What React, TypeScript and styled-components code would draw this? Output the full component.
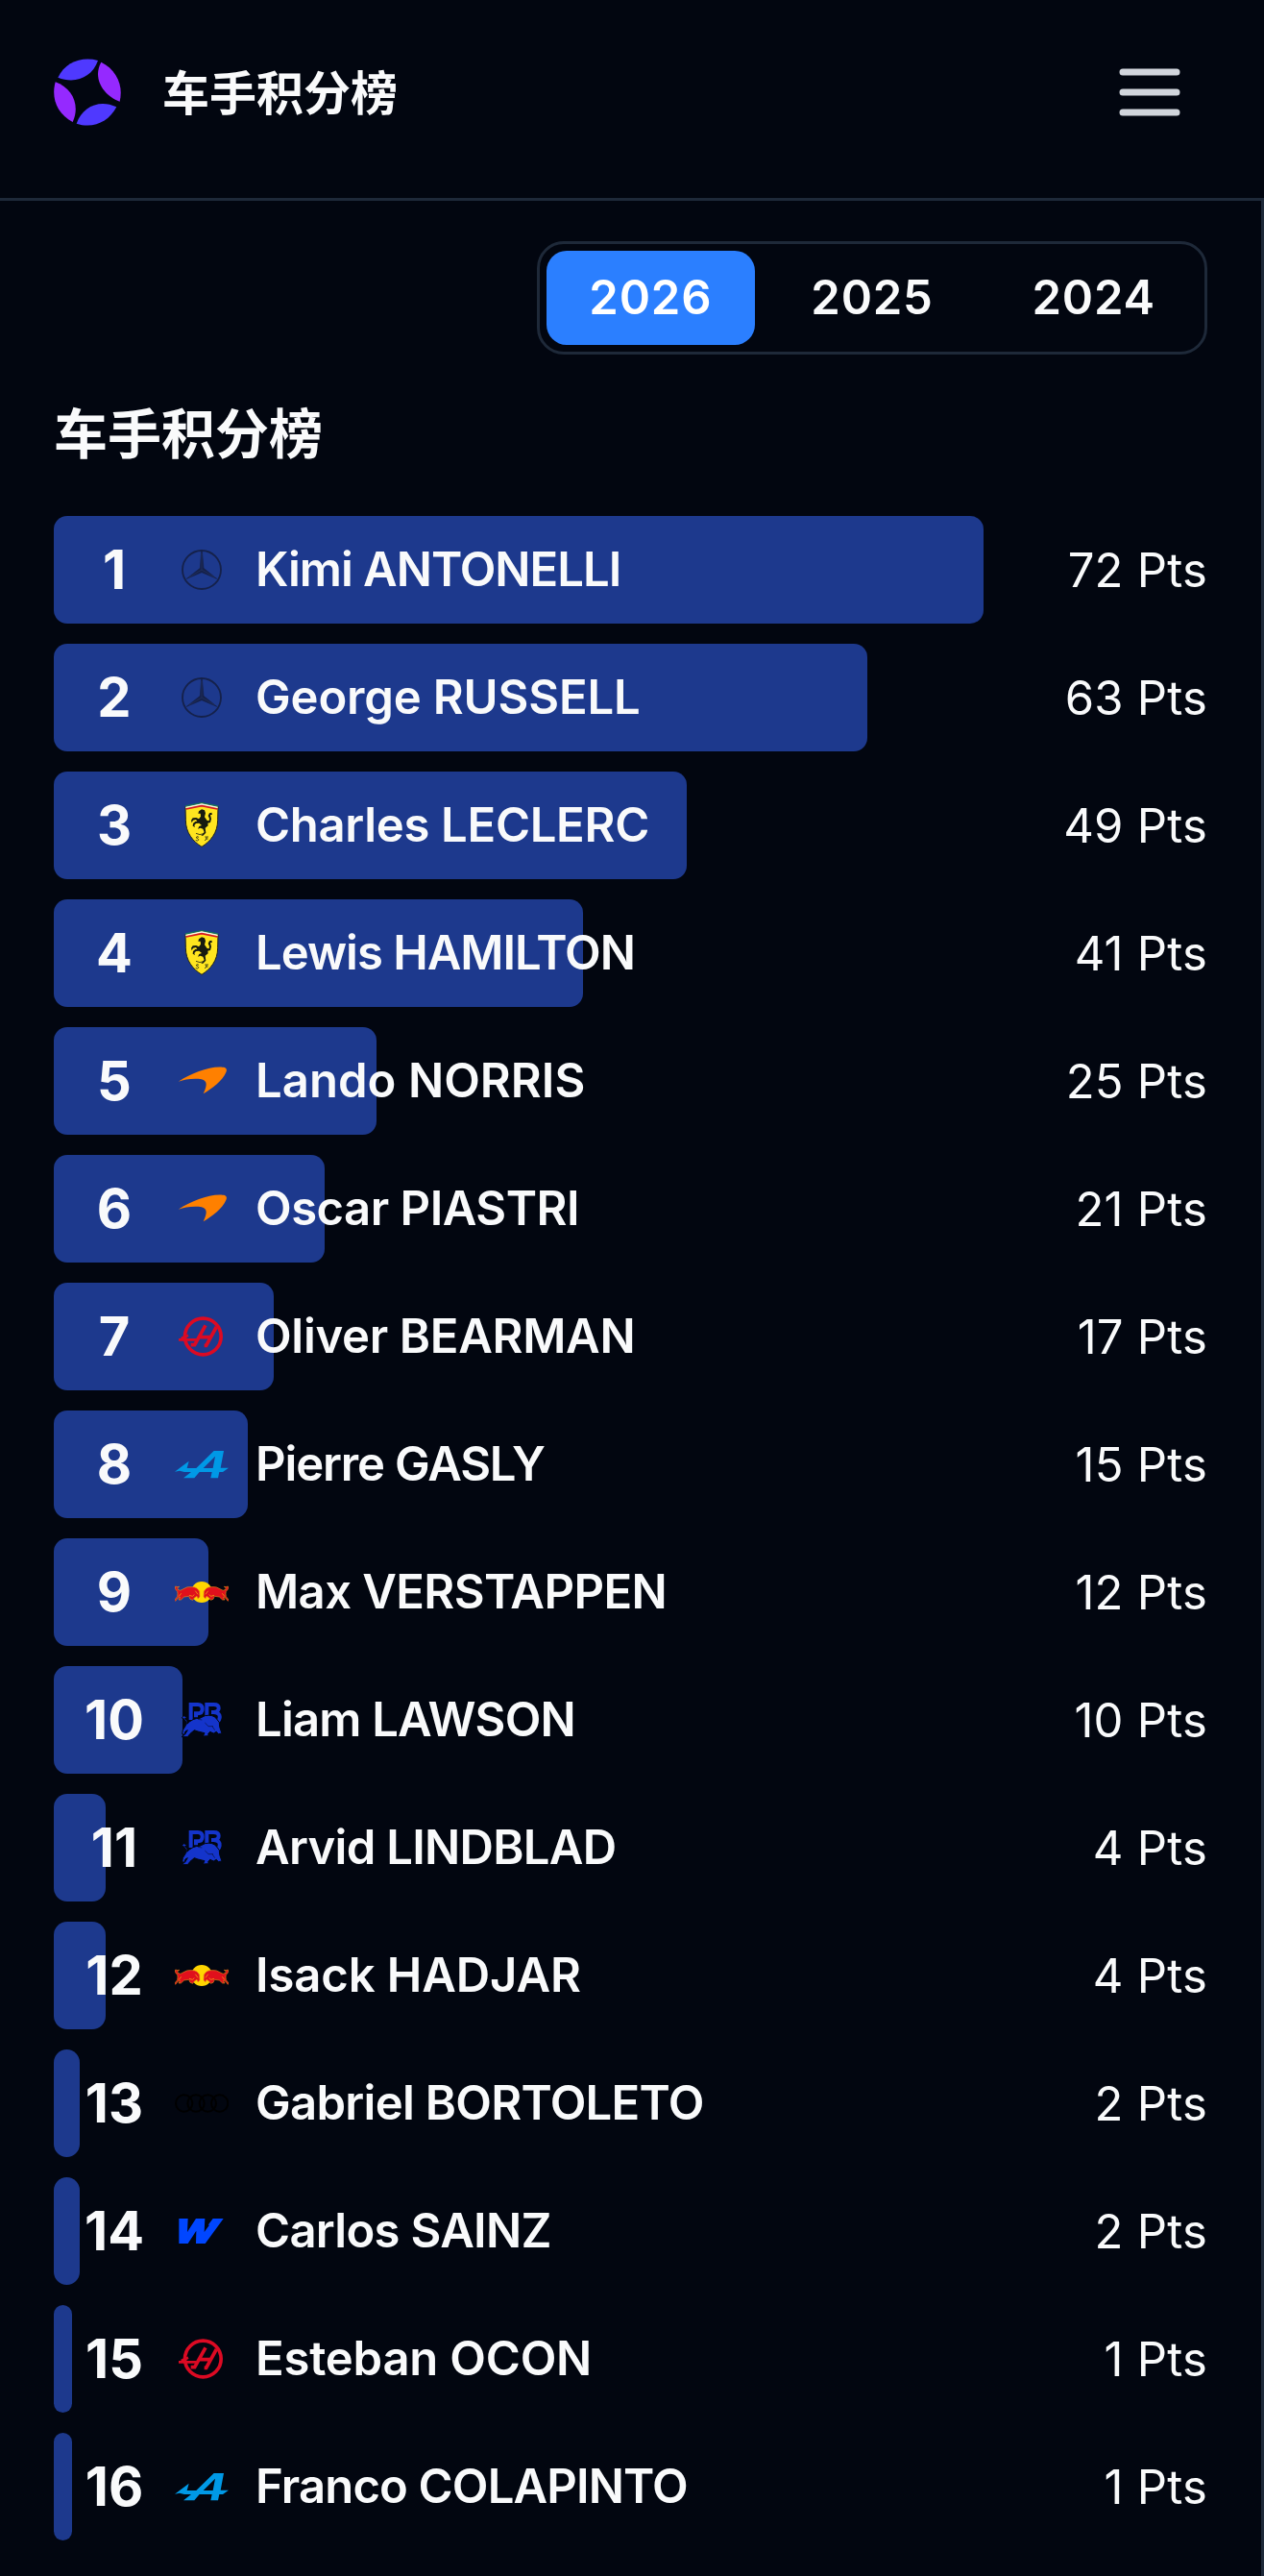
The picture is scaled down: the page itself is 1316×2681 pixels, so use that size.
import { useState } from 'react'
import styled, { createGlobalStyle, css } from 'styled-components'

const colors = {
  background: '#020610',
  border: '#1e2939',
  bar: '#1d398d',
  active: '#2b7fff',
  text: '#f9fafb',
  icon: '#d1d5dc',
}

const GlobalStyle = createGlobalStyle`
  *, *::before, *::after {
    box-sizing: border-box;
  }

  body {
    margin: 0;
    background: ${colors.background};
    color: ${colors.text};
    font-family: Inter, 'Noto Sans CJK SC', sans-serif;
  }

  h1, h2, ol {
    margin: 0;
    padding: 0;
  }
`

const Page = styled.div`
  display: flex;
  flex-direction: column;
  height: 2681px;
  overflow: hidden;
`

const Header = styled.header`
  display: flex;
  align-items: center;
  flex: none;
  height: 209px;
  padding: 0 77px 15px 56px;
  border-bottom: 3px solid ${colors.border};
`

const Logo = styled.svg`
  width: 70px;
  height: 70px;
`

const PageTitle = styled.h1`
  margin-left: 43px;
  padding-top: 4px;
  font-size: 49px;
  line-height: 70px;
  font-weight: 600;
`

const MenuButton = styled.button`
  display: flex;
  margin-left: auto;
  padding: 0;
  border: none;
  background: none;
  color: ${colors.icon};

  svg {
    width: 84px;
    height: 84px;
  }
`

const Main = styled.main`
  flex: 1;
  padding: 42px 56px 0;
  border-right: 3px solid ${colors.border};
`

const Tabs = styled.div`
  display: flex;
  gap: 14px;
  width: 698px;
  height: 118px;
  margin-left: auto;
  padding: 7px;
  border: 3px solid ${colors.border};
  border-radius: 28px;
`

const Tab = styled.button<{ $active: boolean }>`
  flex: 1;
  padding: 0 0 2px;
  border: none;
  border-radius: 21px;
  background: none;
  color: inherit;
  font-family: inherit;
  font-size: 49px;
  font-weight: 600;
  letter-spacing: 0.8px;

  ${({ $active }) =>
    $active &&
    css`
      background: ${colors.active};
      color: #fff;
    `}
`

const SectionTitle = styled.h2`
  margin: 41px 0 43px;
  font-size: 56px;
  line-height: 84px;
  font-weight: 600;
`

const List = styled.ol`
  display: flex;
  flex-direction: column;
  gap: 21px;
  list-style: none;
`

const Row = styled.li`
  position: relative;
  display: flex;
  align-items: center;
  height: 112px;
  padding-left: 14px;
`

// Sits behind the row content
const Bar = styled.div`
  position: absolute;
  inset: 0 auto 0 0;
  z-index: -1;
  min-width: 19px;
  border-radius: 14px;
  background: ${colors.bar};
`

const Rank = styled.span`
  width: 98px;
  font-size: 56px;
  font-weight: 700;
  text-align: center;
`

const TeamIcon = styled.svg`
  width: 56px;
  height: 56px;
  margin: 0 28px 0 14px;
`

const Name = styled.span<{ $tracking: number }>`
  padding-bottom: 1px;
  font-size: 49px;
  font-weight: 600;
  letter-spacing: ${({ $tracking }) => $tracking}px;
  white-space: nowrap;
`

const Points = styled.span`
  margin-left: auto;
  font-size: 49px;
  letter-spacing: 0.2px;
`

type Team = 'mercedes' | 'ferrari' | 'mclaren' | 'haas' | 'alpine' | 'redbull' | 'rb' | 'audi' | 'williams'

const Bull = () => (
  <>
    <path
      d="M8 82Q-2 74 2 66Q9 69 14 67Q6 70 9 76Q18 82 25 75Q38 65 56 68Q70 68 77 82L78 99L72 104L69 97L61 102L56 109L48 106L44 97L29 99L19 108L12 108L17 100L10 102L2 112L-1 109L8 98Q10 89 8 82Z"
      fill="#e0101c"
      stroke="#e8861a"
      strokeWidth="2"
    />
    <path d="M20 88L12 98M45 94L55 97L61 92M64 80L72 91" stroke="#f79a10" strokeWidth="2.5" fill="none" />
  </>
)

const teamLogos: Record<Team, React.ReactNode> = {
  mercedes: (
    <g fill="#15214a" stroke="#15214a">
      <circle cx="84" cy="84" r="60" fill="none" strokeWidth="5.5" />
      <path d="M83 25L79 79L37 112L84 92L131 112L90 79L85 25Z" strokeWidth="2" />
      <path d="M84 32V84L126 108M84 84L43 108" stroke="#2b386a" strokeWidth="1.5" fill="none" />
    </g>
  ),
  ferrari: (
    <>
      <path
        d="M33 25Q58 20 84 14Q111 20 135 25L134 67C134 108 111 134 84 151C57 134 34 108 34 67Z"
        fill="#ffe51f"
        stroke="#242515"
        strokeWidth="3"
      />
      <path d="M33 24L84 14L135 24" stroke="#16785e" strokeWidth="4" fill="none" />
      <path d="M34 28L84 18L134 28" stroke="#f4f4ee" strokeWidth="4" fill="none" />
      <path d="M35 33L84 23L133 33" stroke="#d5162b" strokeWidth="5" fill="none" />
      <path
        d="M75 40L84 34L93 37L96 46L93 58L101 69L107 70L108 63L104 54L108 46L115 44L117 50L111 52L114 64L111 75L103 77L104 85L95 92L97 107L88 116L82 116L92 105L88 95L80 92L72 95L76 87L84 84L76 77L66 78L61 84L63 90L56 86L57 78L64 72L70 71L66 66L57 68L53 76L51 68L56 61L67 60L75 64L81 56L80 47L73 47Z"
        fill="#171a10"
      />
      <path
        d="M66 109Q78 116 90 110M75 121Q67 116 67 123Q79 128 71 132Q66 132 65 129M94 120H105M99 120Q100 131 93 131M97 126H104"
        stroke="#282b14"
        strokeWidth="2.5"
        fill="none"
      />
    </>
  ),
  mclaren: (
    <path d="M11 86C54 60 105 38 149 41C162 41 164 49 160 57C149 84 116 108 89 124C105 91 102 76 64 77C43 77 28 80 11 86Z" fill="#ff8000" />
  ),
  haas: (
    <g fill="none" stroke="#dc0a23" strokeWidth="11">
      <circle cx="88" cy="84" r="56.5" />
      <path d="M12 94H66M20 90L42 80" strokeWidth="8" />
      <path d="M50 110H62L96 49M92 112H98L130 54M74 86H112" />
    </g>
  ),
  alpine: (
    <path
      fill="#0099e6"
      fillRule="evenodd"
      d="M0 107L44 74L38 96H67L122 42H153L143 95H168L150 108H139L135 127H112L116 108H77L61 127H27L51 108H30L15 104ZM89 96H119L126 59Z"
    />
  ),
  redbull: (
    <>
      <circle cx="84" cy="84" r="33" fill="#ffd500" />
      <Bull />
      <g transform="translate(168) scale(-1 1)">
        <Bull />
      </g>
    </>
  ),
  rb: (
    <>
      <g fill="none" stroke="#1434cb" strokeWidth="12">
        <path d="M50 84V36H72Q86 36 86 50Q86 63 72 64H66V76" />
        <path d="M100 72V36H122Q137 36 137 47Q137 59 122 60H114M122 60Q143 62 140 78Q139 84 135 88" />
      </g>
      <path
        d="M35 100Q37 89 30 82L22 78L28 71L40 76L32 79Q42 87 38 97Q56 78 78 79L94 71Q119 66 130 80Q143 91 140 106L147 126L136 128L130 121L121 126L110 121L104 128L106 134L88 135L93 125L72 120L61 116L48 127L40 137L21 137L32 129L40 116L33 120L30 130L23 128L25 116Z"
        fill="#1434cb"
        stroke="#020610"
        strokeWidth="3"
      />
      <path d="M94 93L105 104L120 104M72 82L85 84M117 104L125 116" stroke="#020610" strokeWidth="1.5" fill="none" />
    </>
  ),
  audi: (
    <g fill="none" stroke="#000" strokeWidth="6">
      {[29, 66, 103, 140].map((cx) => (
        <circle key={cx} cx={cx} cy="84" r="26" />
      ))}
    </g>
  ),
  williams: <path d="M13 45H41L39 87L66 45H94L92 87L108 65H104L119 45H152L95 123H66L67 83L41 123H13Z" fill="#0046ff" />,
}

type Driver = {
  name: string
  team: Team
  points: number
  tracking: number
}

const drivers: Driver[] = [
  { name: 'Kimi ANTONELLI', team: 'mercedes', points: 72, tracking: -1 },
  { name: 'George RUSSELL', team: 'mercedes', points: 63, tracking: -0.15 },
  { name: 'Charles LECLERC', team: 'ferrari', points: 49, tracking: -0.3 },
  { name: 'Lewis HAMILTON', team: 'ferrari', points: 41, tracking: -1 },
  { name: 'Lando NORRIS', team: 'mclaren', points: 25, tracking: 0.05 },
  { name: 'Oscar PIASTRI', team: 'mclaren', points: 21, tracking: -0.5 },
  { name: 'Oliver BEARMAN', team: 'haas', points: 17, tracking: -0.3 },
  { name: 'Pierre GASLY', team: 'alpine', points: 15, tracking: -1.15 },
  { name: 'Max VERSTAPPEN', team: 'redbull', points: 12, tracking: -0.6 },
  { name: 'Liam LAWSON', team: 'rb', points: 10, tracking: -0.8 },
  { name: 'Arvid LINDBLAD', team: 'rb', points: 4, tracking: -0.7 },
  { name: 'Isack HADJAR', team: 'redbull', points: 4, tracking: -0.1 },
  { name: 'Gabriel BORTOLETO', team: 'audi', points: 2, tracking: -0.7 },
  { name: 'Carlos SAINZ', team: 'williams', points: 2, tracking: -0.7 },
  { name: 'Esteban OCON', team: 'haas', points: 1, tracking: -0.2 },
  { name: 'Franco COLAPINTO', team: 'alpine', points: 1, tracking: -0.85 },
]

const seasons = ['2026', '2025', '2024']
const MAX_BAR_WIDTH = 968

function App() {
  const [season, setSeason] = useState('2026')
  const leaderPoints = drivers[0].points

  return (
    <>
      <GlobalStyle />
      <Page>
        <Header>
          <Logo viewBox="0 0 210 210">
            <path d="M13 59C36 11 88-8 138 6C120 58 67 81 13 59Z" fill="#4f39ff" />
            <path d="M148 11C196 35 218 83 206 134C155 116 120 61 148 11Z" fill="#9529ff" />
            <path d="M196 151C172 198 122 220 71 203C89 149 144 126 196 151Z" fill="#4f39ff" />
            <path d="M59 198C10 172-9 124 5 73C59 92 83 147 59 198Z" fill="#9529ff" />
          </Logo>
          <PageTitle>车手积分榜</PageTitle>
          <MenuButton aria-label="Menu">
            <svg viewBox="0 0 24 24" fill="none" stroke="currentColor" strokeWidth="2" strokeLinecap="round">
              <path d="M4 6h16M4 12h16M4 18h16" />
            </svg>
          </MenuButton>
        </Header>
        <Main>
          <Tabs>
            {seasons.map((year) => (
              <Tab key={year} $active={year === season} onClick={() => setSeason(year)}>
                {year}
              </Tab>
            ))}
          </Tabs>
          <SectionTitle>车手积分榜</SectionTitle>
          <List>
            {drivers.map(({ name, team, points, tracking }, index) => (
              <Row key={name}>
                <Bar style={{ width: (points / leaderPoints) * MAX_BAR_WIDTH }} />
                <Rank>{index + 1}</Rank>
                <TeamIcon viewBox="0 0 168 168">{teamLogos[team]}</TeamIcon>
                <Name $tracking={tracking}>{name}</Name>
                <Points>{points} Pts</Points>
              </Row>
            ))}
          </List>
        </Main>
      </Page>
    </>
  )
}

export default App
